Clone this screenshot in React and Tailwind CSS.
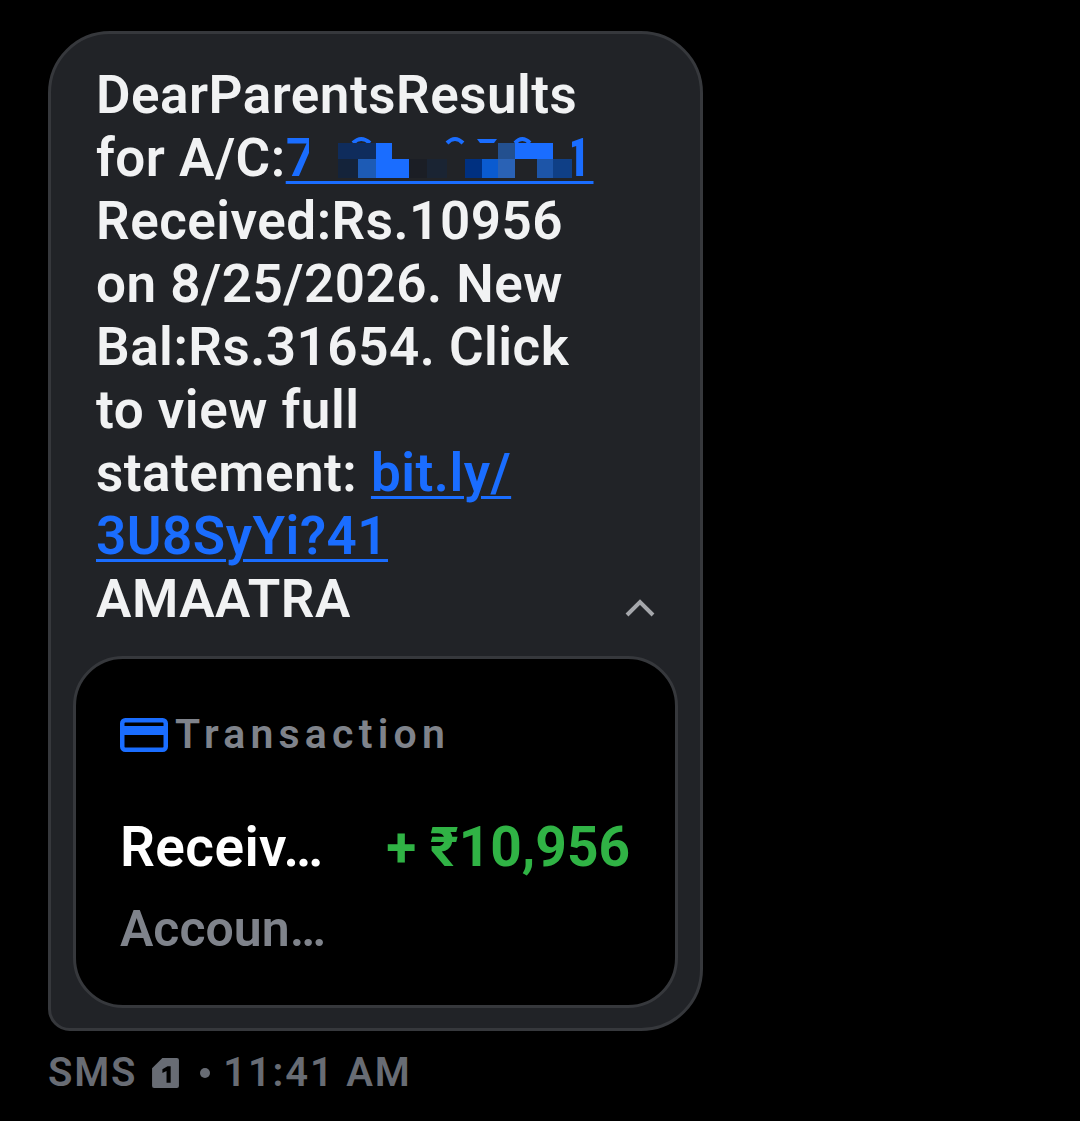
const LINK = "#1a6dff";

// pixelated blocks over the account number, in page coordinates
const BLOCKS = [
  [338, 143, 38, 16, "#0f2c5c"], [376, 143, 16, 16, LINK],
  [338, 159, 20, 19, "#14233a"], [358, 159, 18, 19, "#1d5bb5"], [376, 159, 33, 19, LINK],
  [409, 159, 18, 19, "#1b1e25"], [427, 159, 20, 19, "#1a2433"], [465, 159, 17, 19, "#003080"],
  [482, 159, 16, 19, "#0a5bd0"], [498, 143, 17, 16, "#23508f"], [498, 159, 17, 19, "#2a62b5"],
  [515, 143, 38, 16, LINK], [537, 159, 16, 19, "#1d55a8"], [553, 159, 19, 19, "#0f3f86"],
];

function Redacted() {
  return (
    <svg className="absolute left-[189px] top-0" width="310" height="63" viewBox="285 127 310 63" fill="none">
      <rect x="309" y="134" width="263" height="45" fill="#212327" />
      <path d="M353 143 Q361 135 370 143 M447 143 Q455 135 463 143 M515 143 Q522 135 530 143" stroke={LINK} strokeWidth="4" />
      <path d="M477 139 H497 L494 143 H480 Z" fill={LINK} />
      {BLOCKS.map(([x, y, w, h, c], i) => (
        <rect key={i} x={x} y={y} width={w} height={h} fill={c} />
      ))}
    </svg>
  );
}

export default function App() {
  return (
    <div className="min-h-[1121px] bg-black pt-[31px] pl-[48px] font-['Roboto',sans-serif] overflow-hidden">
      <div className="w-[655px] h-[1000px] rounded-t-[62px] rounded-br-[62px] rounded-bl-[22px] border-[3px] border-[#36383c] bg-[#212327] px-[22px] pt-[30px]">
        <div className="pl-[23px] text-[53px] leading-[63px] font-semibold text-[#f1f2f3] whitespace-nowrap tracking-[0.5px]">
          <div>DearParentsResults</div>
          <div className="relative">
            for A/C:<span className="underline decoration-[3px] underline-offset-[5px]" style={{ color: LINK }}>7000000011</span>
            <Redacted />
          </div>
          <div>Received:Rs.10956</div>
          <div>on 8/25/2026. New</div>
          <div>Bal:Rs.31654. Click</div>
          <div>to view full</div>
          <div>
            statement: <span className="underline decoration-[3px] underline-offset-[5px] text-[#1a6dff]">bit.ly/</span>
          </div>
          <div className="underline decoration-[3px] underline-offset-[5px] text-[#1a6dff]">3U8SyYi?41</div>
          <div className="relative">
            AMAATRA
            <svg className="absolute left-[528px] top-[29px]" width="32" height="20" viewBox="0 0 32 20" fill="none">
              <path d="M3 18 L16 5 L29 18" stroke="#a5a7ab" strokeWidth="4" />
            </svg>
          </div>
        </div>

        <div className="mt-[25px] h-[352px] w-[605px] rounded-[50px] border-[3px] border-[#36383c] bg-black pl-[44px] pr-[45px] pt-[54px]">
          <div className="flex items-center gap-[7px] h-[44px]">
            <svg width="48" height="34" viewBox="0 0 48 34" fill="none">
              <rect x="2.25" y="2.25" width="43.5" height="29.5" rx="3" stroke="#1a6dff" strokeWidth="4.5" />
              <rect x="2" y="8" width="44" height="9" fill="#1a6dff" />
            </svg>
            <span className="text-[41px] font-semibold tracking-[5.2px] text-[#7f838b]">Transaction</span>
          </div>
          <div className="mt-[58px] flex items-center justify-between h-[64px] whitespace-nowrap">
            <span className="text-[55px] font-semibold tracking-[0.4px] text-white">Receiv…</span>
            <span className="text-[55px] font-bold text-[#30b345]">+ ₹10,956</span>
          </div>
          <div className="mt-[18px] text-[50px] leading-[64px] font-semibold text-[#7f838b]">Accoun…</div>
        </div>
      </div>

      <div className="mt-[20px] flex items-center text-[#686c74] text-[40px] leading-[44px] font-semibold tracking-[1.8px]">
        <span>SMS</span>
        <svg className="ml-[15px]" width="27" height="31" viewBox="0 0 26 30">
          <path d="M10 0 H24 a2 2 0 0 1 2 2 V27 a2 2 0 0 1 -2 2 H2 a2 2 0 0 1 -2 -2 V10 Z" fill="#686c74" />
          <path d="M10 11 L15 8 H18 V24 H14 V12.5 L10 14.5 Z" fill="#000" />
        </svg>
        <span className="ml-[21px] w-[10px] h-[10px] rounded-full bg-[#686c74]" />
        <span className="ml-[13px]">11:41 AM</span>
      </div>
    </div>
  );
}
